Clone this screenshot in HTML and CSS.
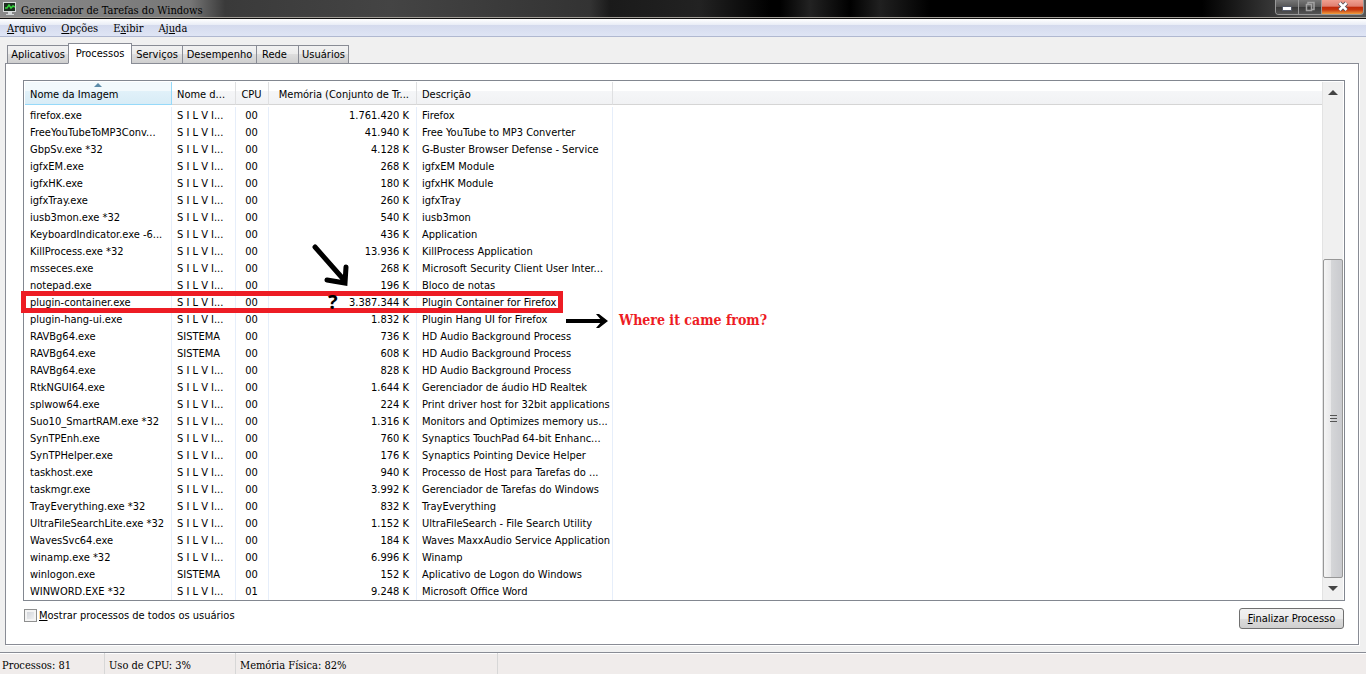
FILE: index.html
```
<!DOCTYPE html>
<html lang="pt-BR">
<head>
    <meta charset="UTF-8">
    <meta name="viewport" content="width=device-width, initial-scale=1.0">
    <title>Gerenciador de Tarefas do Windows</title>
    <link rel="stylesheet" href="styles.css">
</head>
<body>
<header class="titlebar">
    <svg class="app-icon" viewBox="0 0 16 16" aria-hidden="true">
        <rect x="1" y="2" width="13" height="10" fill="#d8dcdc"/>
        <rect x="2" y="3" width="11" height="8" fill="#1c2c20"/>
        <path d="M3 8h2l2-3 2 3 2-2 2 1" fill="none" stroke="#35d43c" stroke-width="1.5"/>
        <path d="M6 12h4v2h2v1H4v-1h2z" fill="#d3d7d8"/>
    </svg>
    <h1>Gerenciador de Tarefas do Windows</h1>
    <div class="window-buttons">
        <button class="win-button" aria-label="Minimizar">
            <svg viewBox="0 0 14 14"><rect x="2.5" y="6.5" width="9" height="4" fill="#fff" stroke="#555a68"/></svg>
        </button>
        <button class="win-button" aria-label="Restaurar" disabled>
            <svg viewBox="0 0 14 14"><path d="M5 4V2.500h6v7H9M3.500 4.500h5v6h-5z" fill="none" stroke="#a2a2a2" stroke-width="1.5"/></svg>
        </button>
        <button class="win-button close" aria-label="Fechar">
            <svg viewBox="0 0 14 14">
                <path d="M3.500 3l7 7M10.500 3l-7 7" stroke="#59545e" stroke-width="4.500"/>
                <path d="M3.500 3l7 7M10.500 3l-7 7" stroke="#fff" stroke-width="2.500"/>
            </svg>
        </button>
    </div>
</header>

<nav class="menubar">
    <a href="#"><u>A</u>rquivo</a>
    <a href="#"><u>O</u>pções</a>
    <a href="#">E<u>x</u>ibir</a>
    <a href="#">Aj<u>u</u>da</a>
</nav>

<main>
    <div class="tabs" role="tablist">
        <button role="tab" class="tab tab-apps">Aplicativos</button>
        <button role="tab" class="tab tab-processes active" aria-selected="true">Processos</button>
        <button role="tab" class="tab tab-services">Serviços</button>
        <button role="tab" class="tab tab-performance">Desempenho</button>
        <button role="tab" class="tab tab-network">Rede</button>
        <button role="tab" class="tab tab-users">Usuários</button>
    </div>

    <section class="panel">
        <div class="list">
            <table>
                <colgroup>
                    <col class="col-image">
                    <col class="col-user">
                    <col class="col-cpu">
                    <col class="col-memory">
                    <col class="col-description">
                    <col>
                </colgroup>
                <thead>
                    <tr><th class="sorted">Nome da Imagem</th><th>Nome d...</th><th>CPU</th><th>Memória (Conjunto de Tr...</th><th>Descrição</th><th></th></tr>
                </thead>
                <tbody>
                    <tr><td>firefox.exe</td><td>S I L V I...</td><td>00</td><td>1.761.420 K</td><td>Firefox</td><td></td></tr>
                    <tr><td>FreeYouTubeToMP3Conv...</td><td>S I L V I...</td><td>00</td><td>41.940 K</td><td>Free YouTube to MP3 Converter</td><td></td></tr>
                    <tr><td>GbpSv.exe *32</td><td>S I L V I...</td><td>00</td><td>4.128 K</td><td>G-Buster Browser Defense - Service</td><td></td></tr>
                    <tr><td>igfxEM.exe</td><td>S I L V I...</td><td>00</td><td>268 K</td><td>igfxEM Module</td><td></td></tr>
                    <tr><td>igfxHK.exe</td><td>S I L V I...</td><td>00</td><td>180 K</td><td>igfxHK Module</td><td></td></tr>
                    <tr><td>igfxTray.exe</td><td>S I L V I...</td><td>00</td><td>260 K</td><td>igfxTray</td><td></td></tr>
                    <tr><td>iusb3mon.exe *32</td><td>S I L V I...</td><td>00</td><td>540 K</td><td>iusb3mon</td><td></td></tr>
                    <tr><td>KeyboardIndicator.exe -6...</td><td>S I L V I...</td><td>00</td><td>436 K</td><td>Application</td><td></td></tr>
                    <tr><td>KillProcess.exe *32</td><td>S I L V I...</td><td>00</td><td>13.936 K</td><td>KillProcess Application</td><td></td></tr>
                    <tr><td>msseces.exe</td><td>S I L V I...</td><td>00</td><td>268 K</td><td>Microsoft Security Client User Inter...</td><td></td></tr>
                    <tr><td>notepad.exe</td><td>S I L V I...</td><td>00</td><td>196 K</td><td>Bloco de notas</td><td></td></tr>
                    <tr><td>plugin-container.exe</td><td>S I L V I...</td><td>00</td><td>3.387.344 K</td><td>Plugin Container for Firefox</td><td></td></tr>
                    <tr><td>plugin-hang-ui.exe</td><td>S I L V I...</td><td>00</td><td>1.832 K</td><td>Plugin Hang UI for Firefox</td><td></td></tr>
                    <tr><td>RAVBg64.exe</td><td>SISTEMA</td><td>00</td><td>736 K</td><td>HD Audio Background Process</td><td></td></tr>
                    <tr><td>RAVBg64.exe</td><td>SISTEMA</td><td>00</td><td>608 K</td><td>HD Audio Background Process</td><td></td></tr>
                    <tr><td>RAVBg64.exe</td><td>S I L V I...</td><td>00</td><td>828 K</td><td>HD Audio Background Process</td><td></td></tr>
                    <tr><td>RtkNGUI64.exe</td><td>S I L V I...</td><td>00</td><td>1.644 K</td><td>Gerenciador de áudio HD Realtek</td><td></td></tr>
                    <tr><td>splwow64.exe</td><td>S I L V I...</td><td>00</td><td>224 K</td><td>Print driver host for 32bit applications</td><td></td></tr>
                    <tr><td>Suo10_SmartRAM.exe *32</td><td>S I L V I...</td><td>00</td><td>1.316 K</td><td>Monitors and Optimizes memory us...</td><td></td></tr>
                    <tr><td>SynTPEnh.exe</td><td>S I L V I...</td><td>00</td><td>760 K</td><td>Synaptics TouchPad 64-bit Enhanc...</td><td></td></tr>
                    <tr><td>SynTPHelper.exe</td><td>S I L V I...</td><td>00</td><td>176 K</td><td>Synaptics Pointing Device Helper</td><td></td></tr>
                    <tr><td>taskhost.exe</td><td>S I L V I...</td><td>00</td><td>940 K</td><td>Processo de Host para Tarefas do ...</td><td></td></tr>
                    <tr><td>taskmgr.exe</td><td>S I L V I...</td><td>00</td><td>3.992 K</td><td>Gerenciador de Tarefas do Windows</td><td></td></tr>
                    <tr><td>TrayEverything.exe *32</td><td>S I L V I...</td><td>00</td><td>832 K</td><td>TrayEverything</td><td></td></tr>
                    <tr><td>UltraFileSearchLite.exe *32</td><td>S I L V I...</td><td>00</td><td>1.152 K</td><td>UltraFileSearch - File Search Utility</td><td></td></tr>
                    <tr><td>WavesSvc64.exe</td><td>S I L V I...</td><td>00</td><td>184 K</td><td>Waves MaxxAudio Service Application</td><td></td></tr>
                    <tr><td>winamp.exe *32</td><td>S I L V I...</td><td>00</td><td>6.996 K</td><td>Winamp</td><td></td></tr>
                    <tr><td>winlogon.exe</td><td>SISTEMA</td><td>00</td><td>152 K</td><td>Aplicativo de Logon do Windows</td><td></td></tr>
                    <tr><td>WINWORD.EXE *32</td><td>S I L V I...</td><td>01</td><td>9.248 K</td><td>Microsoft Office Word</td><td></td></tr>
                </tbody>
            </table>

            <div class="scrollbar">
                <button class="scroll-arrow" aria-label="Rolar para cima">
                    <svg viewBox="0 0 10 6"><path d="M0 5h10L5 0z" fill="#444"/></svg>
                </button>
                <div class="scroll-space"></div>
                <div class="scroll-thumb">
                    <svg viewBox="0 0 7 9"><path d="M0 1.500h7M0 4.500h7M0 7.500h7" stroke="#555"/></svg>
                </div>
                <button class="scroll-arrow" aria-label="Rolar para baixo">
                    <svg viewBox="0 0 10 6"><path d="M0 0h10L5 5z" fill="#444"/></svg>
                </button>
            </div>

            <!-- notes drawn over the list -->
            <div class="note-box"></div>
            <svg class="note-arrow-down" viewBox="0 0 38 44" aria-hidden="true">
                <path d="M3 3L33 37M34 23L33 39L15 36" fill="none" stroke="#000" stroke-width="5" stroke-linecap="round"/>
            </svg>
            <span class="note-mark">?</span>
            <svg class="note-arrow-right" viewBox="0 0 42 16" aria-hidden="true">
                <path d="M0 8h38" stroke="#000" stroke-width="4"/>
                <path d="M30 1h3l9 7-9 7h-3l6-7z" fill="#000"/>
            </svg>
            <span class="note-text">Where it came from?</span>
        </div>

        <div class="actions">
            <label><input type="checkbox"><span><u>M</u>ostrar processos de todos os usuários</span></label>
            <button class="end-process"><u>F</u>inalizar Processo</button>
        </div>
    </section>
</main>

<footer class="statusbar">
    <span class="status-processes">Processos: 81</span>
    <span class="status-cpu">Uso de CPU: 3%</span>
    <span class="status-memory">Memória Física: 82%</span>
</footer>
</body>
</html>
```
FILE: styles.css
```
* {
    box-sizing: border-box;
}
body {
    margin: 0;
    min-height: 100vh;
    display: flex;
    flex-direction: column;
    background-color: #f0f0f0;
    color: #000;
    font-family: "DejaVu Sans Condensed", Tahoma, sans-serif;
    font-size: 11px;
    line-height: 17px;
}
button {
    font: inherit;
    color: inherit;
    padding: 0;
}
svg {
    display: block;
}

/* title bar */
.titlebar {
    display: flex;
    align-items: flex-start;
    height: 19px;
    padding-left: 2px;
    border-bottom: 1px solid #111;
    box-shadow: inset 0 -1px #a39f98;
    background: linear-gradient(to right, #8a8a8a 0, #777 190px, #3a3a3a 225px, #444 390px, #333 590px, #1a1a1a 610px, #222 700px, #000 770px, #000 780px, #222 810px, #000 850px, #202020 880px, #000 930px, #000 88%, #555 96%);
}
.app-icon {
    width: 16px;
    height: 16px;
}
.titlebar h1 {
    flex: 1;
    margin: 0;
    padding: 2px 0 0 3px;
    font: 11px/17px "DejaVu Serif Condensed", Cambria, serif;
}
.window-buttons {
    display: flex;
    height: 15px;
    margin-right: 2px;
    border: 1px solid #999;
    border-top: 0;
    border-radius: 0 0 4px 4px;
    overflow: hidden;
}
.win-button {
    display: flex;
    justify-content: center;
    width: 23px;
    border: 0;
    border-right: 1px solid #999;
    background: linear-gradient(#777, #555 50%, #383838 50%, #555);
}
.win-button svg {
    width: 14px;
    height: 14px;
}
.close {
    width: 41px;
    border-right: 0;
    background: linear-gradient(#f0a090, #e08070 45%, #c02808 50%, #c83810 70%, #f0a040);
}

/* menu */
.menubar {
    display: flex;
    gap: 15px;
    height: 18px;
    padding-left: 7px;
    border-bottom: 1px solid #b0b8d0;
    background: linear-gradient(#fff, #e8ecf6 6px, #d4daed 6px, #dfe5f5);
    font: 11px/19px "DejaVu Serif Condensed", Cambria, serif;
}
.menubar a {
    color: inherit;
    text-decoration: none;
}

/* tabs */
main {
    flex: 1;
    display: flex;
    flex-direction: column;
    padding: 6px 7px 7px 5px;
}
.tabs {
    display: flex;
    align-items: flex-end;
    height: 21px;
    padding-left: 2px;
    position: relative;
    z-index: 1;
}
.tab {
    height: 19px;
    margin-right: -1px;
    border: 1px solid #898c95;
    background: linear-gradient(#f2f2f2, #ebebeb 50%, #ddd 50%, #cfcfcf);
}
.tab-apps {
    width: 62px;
}
.tab-processes {
    width: 64px;
}
.tab-services {
    width: 52px;
}
.tab-performance {
    width: 75px;
}
.tab-network {
    width: 43px;
    padding-right: 6px;
}
.tab-users {
    width: 51px;
}
.tab.active {
    height: 21px;
    border-bottom-color: #fff;
    background: #fff;
}
.panel {
    flex: 1;
    margin-top: -1px;
    padding: 16px 13px 15px 17px;
    border: 1px solid #898c95;
    background-color: #fff;
    box-shadow: 1px 1px #fff;
}

/* process list */
.list {
    display: flex;
    position: relative;
    border: 1px solid #828790;
    padding: 1px 1px 0;
}
table {
    flex: 1;
    table-layout: fixed;
    border-spacing: 0;
    white-space: nowrap;
}
.col-image {
    width: 147px;
}
.col-user {
    width: 64px;
}
.col-cpu {
    width: 33px;
}
.col-memory {
    width: 148px;
}
.col-description {
    width: 196px;
}
th {
    height: 23px;
    padding: 2px 5px 0;
    border-right: 1px solid #dfe0e2;
    border-bottom: 1px solid #d5d5d5;
    background: linear-gradient(#fff 9px, #f5f6f8 9px, #f1f2f4);
    font-weight: normal;
    text-align: left;
}
th:last-child, td:last-child {
    border-right: 0;
}
.sorted {
    position: relative;
    border-color: #96d9f9;
    background: linear-gradient(#f2f9fc, #f2f9fc 9px, #e1f1f9 9px, #d8ecf6);
}
.sorted::after {
    content: "";
    position: absolute;
    top: 1px;
    left: 50%;
    border: 4px solid transparent;
    border-top: 0;
    border-bottom-color: #5b8ba8;
    margin-left: -4px;
}
th:nth-child(4), td:nth-child(4) {
    text-align: right;
    padding-right: 7px;
}
th:nth-child(3), td:nth-child(3) {
    text-align: center;
    padding-left: 0;
    padding-right: 1px;
}
/* lets long descriptions run up to the column line */
th:nth-child(5), td:nth-child(5) {
    padding-right: 0;
}
td {
    height: 17px;
    padding: 0 5px;
    border-right: 1px solid #e6eefa;
}
tbody::before {
    content: "";
    display: block;
    height: 2px;
}

/* scrollbar */
.scrollbar {
    display: flex;
    flex-direction: column;
    width: 21px;
    border-left: 1px solid #e3e3e3;
    background-color: #f0f0f0;
}
.scroll-arrow {
    display: flex;
    justify-content: center;
    align-items: center;
    height: 22px;
    border: 0;
    background: transparent;
}
.scroll-arrow svg {
    width: 10px;
    height: 6px;
}
.scroll-space {
    flex: 155;
}
.scroll-thumb {
    flex: 317;
    display: flex;
    justify-content: center;
    align-items: center;
    border: 1px solid #979797;
    border-radius: 2px;
    background: linear-gradient(to right, #f5f5f5, #e8e8e9 40%, #d5d6d8 40%, #c9cace);
}
.scroll-thumb svg {
    width: 7px;
    height: 9px;
}

/* notes */
.note-box {
    position: absolute;
    left: -3px;
    top: 210px;
    width: 542px;
    height: 22px;
    border: 5px solid #ed1c24;
}
.note-arrow-down {
    position: absolute;
    left: 288px;
    top: 163px;
    width: 38px;
    height: 44px;
}
.note-mark {
    position: absolute;
    left: 304px;
    top: 211px;
    font: bold 20px/20px "Noto Sans", sans-serif;
}
.note-arrow-right {
    position: absolute;
    left: 542px;
    top: 232px;
    width: 42px;
    height: 16px;
}
.note-text {
    position: absolute;
    left: 595px;
    top: 229px;
    color: #ed1c24;
    font: bold 14px/20px "DejaVu Serif Condensed", Cambria, serif;
}

/* below the list */
.actions {
    display: flex;
    justify-content: space-between;
    align-items: flex-start;
    padding: 6px 1px 0;
}
.actions label {
    display: flex;
    align-items: center;
    gap: 2px;
}
.actions input {
    appearance: none;
    width: 13px;
    height: 13px;
    margin: 0;
    border: 1px solid #8e8f8f;
    background: linear-gradient(135deg, #cbcfd5, #f6f6f6);
    box-shadow: inset 0 0 0 2px #f4f4f4;
}
.end-process {
    width: 105px;
    height: 21px;
    margin-top: 1px;
    border: 1px solid #707070;
    border-radius: 3px;
    background: linear-gradient(#f2f2f2, #ebebeb 50%, #ddd 50%, #cfcfcf);
}

/* status bar */
.statusbar {
    display: flex;
    height: 23px;
    border-top: 1px solid #898c95;
    border-bottom: 1px solid #fff;
    box-shadow: inset 0 1px #fff;
    background-color: #f0eceb;
    font: 11px/25px "DejaVu Serif Condensed", Cambria, serif;
}
.statusbar span {
    padding-left: 4px;
    border-right: 1px solid #d7d7d7;
}
.statusbar .status-processes {
    width: 105px;
    padding-left: 2px;
}
.status-cpu {
    width: 131px;
}
.status-memory {
    width: 262px;
}
```
